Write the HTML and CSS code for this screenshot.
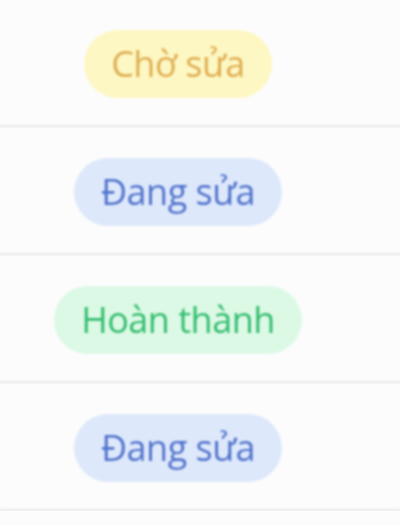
FILE: index.html
```html
<!DOCTYPE html>
<html lang="vi">
<head>
<meta charset="utf-8">
<link rel="stylesheet" href="styles.css">
</head>
<body>
<div class="table">
  <div class="row"><div class="cell"><span class="badge badge-waiting">Chờ sửa</span></div></div>
  <div class="row"><div class="cell"><span class="badge badge-progress">Đang sửa</span></div></div>
  <div class="row"><div class="cell"><span class="badge badge-done">Hoàn thành</span></div></div>
  <div class="row"><div class="cell"><span class="badge badge-progress">Đang sửa</span></div></div>
</div>
</body>
</html>
```
FILE: styles.css
```css
html, body {
  margin: 0;
  padding: 0;
  background: #fcfcfc;
  overflow: hidden;
}
body {
  font-family: "Open Sans", "Noto Sans", sans-serif;
}
.table {
  margin-top: -1px;
  filter: blur(1px);
}
.row {
  height: 126px;
  border-bottom: 2px solid #e5e6e6;
  display: flex;
  align-items: center;
}
.cell {
  width: 356px;
  display: flex;
  justify-content: center;
}
.badge {
  display: inline-flex;
  align-items: center;
  height: 68px;
  padding: 0 27px;
  border-radius: 34px;
  font-size: 36px;
  font-weight: 500;
  letter-spacing: -0.5px;
  margin-top: 3px;
}
.badge-waiting {
  background: #fdf7c3;
  color: #dfae52;
}
.badge-progress {
  background: #dde8fb;
  color: #5274cc;
}
.badge-done {
  background: #dcf9e6;
  color: #33bd6e;
}
```
